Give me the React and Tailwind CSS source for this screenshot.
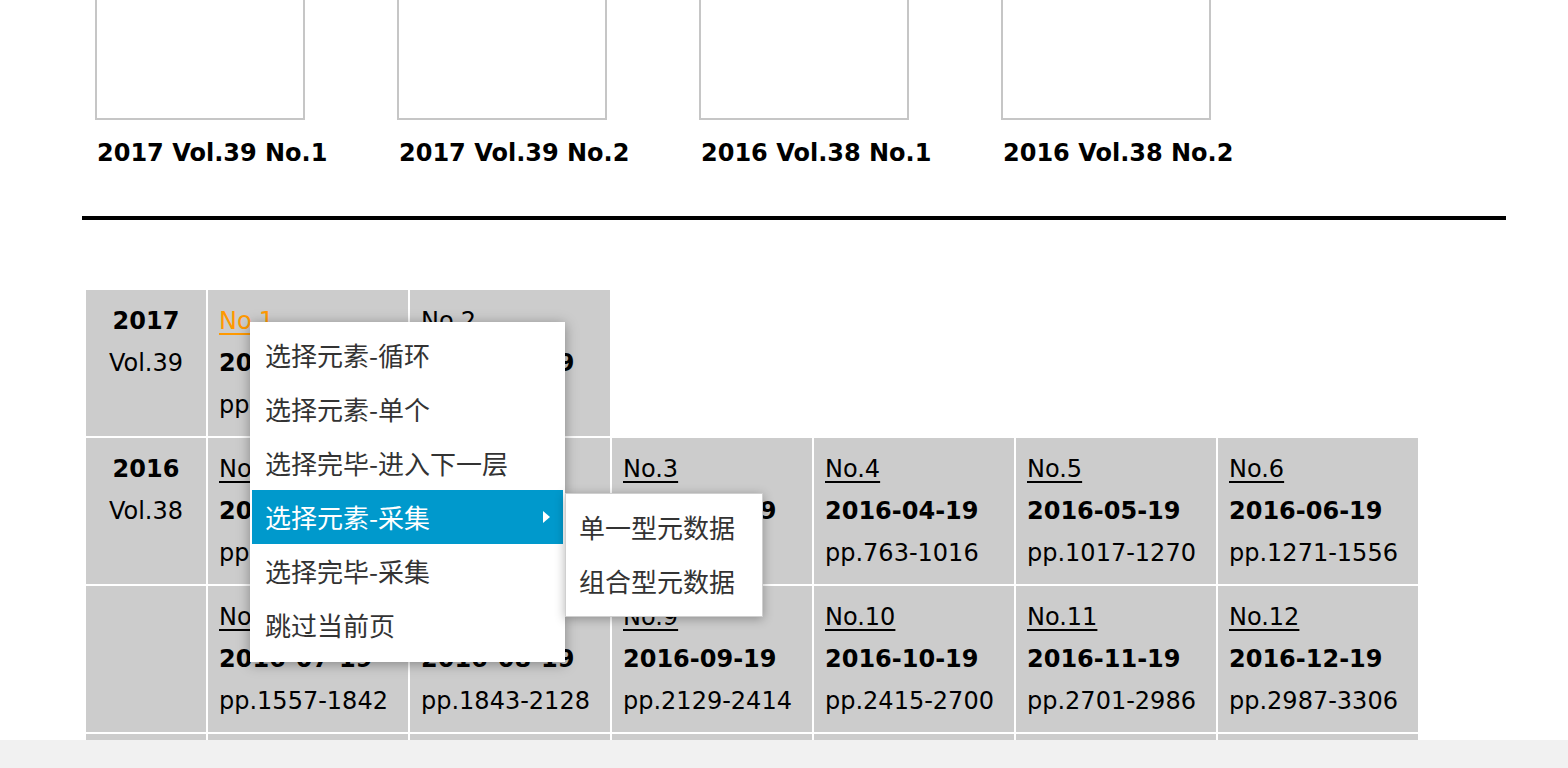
import React from 'react';

const covers = ['2017 Vol.39 No.1', '2017 Vol.39 No.2', '2016 Vol.38 No.1', '2016 Vol.38 No.2'];

const rows = [
  {
    year: '2017',
    vol: 'Vol.39',
    issues: [
      { no: 'No.1', date: '2017-01-19', pp: 'pp.1-298', active: true },
      { no: 'No.2', date: '2017-02-19', pp: 'pp.299-566' },
    ],
  },
  {
    year: '2016',
    vol: 'Vol.38',
    issues: [
      { no: 'No.1', date: '2016-01-19', pp: 'pp.1-254' },
      { no: 'No.2', date: '2016-02-19', pp: 'pp.255-508' },
      { no: 'No.3', date: '2016-03-19', pp: 'pp.509-762' },
      { no: 'No.4', date: '2016-04-19', pp: 'pp.763-1016' },
      { no: 'No.5', date: '2016-05-19', pp: 'pp.1017-1270' },
      { no: 'No.6', date: '2016-06-19', pp: 'pp.1271-1556' },
    ],
  },
  {
    year: '',
    vol: '',
    issues: [
      { no: 'No.7', date: '2016-07-19', pp: 'pp.1557-1842' },
      { no: 'No.8', date: '2016-08-19', pp: 'pp.1843-2128' },
      { no: 'No.9', date: '2016-09-19', pp: 'pp.2129-2414' },
      { no: 'No.10', date: '2016-10-19', pp: 'pp.2415-2700' },
      { no: 'No.11', date: '2016-11-19', pp: 'pp.2701-2986' },
      { no: 'No.12', date: '2016-12-19', pp: 'pp.2987-3306' },
    ],
  },
  {
    year: '2015',
    vol: 'Vol.37',
    issues: [
      { no: 'No.1', date: '2015-01-19', pp: 'pp.1-262' },
      { no: 'No.2', date: '2015-02-19', pp: 'pp.263-520' },
      { no: 'No.3', date: '2015-03-19', pp: 'pp.521-786' },
      { no: 'No.4', date: '2015-04-19', pp: 'pp.787-1040' },
      { no: 'No.5', date: '2015-05-19', pp: 'pp.1041-1300' },
      { no: 'No.6', date: '2015-06-19', pp: 'pp.1301-1572' },
    ],
  },
];

const menuItems = ['选择元素-循环', '选择元素-单个', '选择完毕-进入下一层', '选择元素-采集', '选择完毕-采集', '跳过当前页'];

const App = () => {
  return (
    <div
      className="relative flex flex-col h-[768px] w-full overflow-hidden bg-white text-black"
      style={{ fontFamily: '"DejaVu Sans", Verdana, sans-serif' }}
    >
      {/* Page content */}
      <div className="flex-1 overflow-hidden">
        {/* Covers */}
        <div className="flex pl-[95px] -mt-[30px]">
          {covers.map((c) => (
            <div key={c} className="w-[302px] shrink-0">
              <div className="w-[210px] h-[150px] border-2 border-[#c6c6c6] bg-white" />
              <div className="mt-[18px] pl-[2px] text-[24px] leading-[30px] font-bold whitespace-nowrap">{c}</div>
            </div>
          ))}
        </div>

        {/* Divider */}
        <div className="ml-[82px] w-[1424px] h-[4px] bg-black mt-[48px]" />

        {/* Issues table */}
        <div className="ml-[86px] mt-[70px] flex flex-col gap-[2px]">
          {rows.map((r, i) => (
            <div key={i} className="flex gap-[2px]">
              <div className="w-[120px] h-[146px] shrink-0 bg-[#cccccc] pt-[10px] text-center text-[24px] leading-[42px]">
                <div className="font-bold">{r.year}</div>
                <div>{r.vol}</div>
              </div>
              {r.issues.map((it) => (
                <div key={it.no} className="w-[200px] h-[146px] shrink-0 bg-[#cccccc] pt-[10px] pl-[11px] text-[24px] leading-[42px] whitespace-nowrap">
                  <div className={`underline underline-offset-[4px] ${it.active ? 'text-[#ff9900]' : 'text-black'}`}>{it.no}</div>
                  <div className="font-bold">{it.date}</div>
                  <div>{it.pp}</div>
                </div>
              ))}
            </div>
          ))}
        </div>
      </div>

      {/* Horizontal scrollbar track */}
      <div className="h-[28px] shrink-0 bg-[#f1f1f1]" />

      {/* Context menu */}
      <div
        className="absolute left-[250px] top-[322px] w-[315px] h-[340px] bg-white pt-[6px] px-[2px] shadow-[0_2px_12px_rgba(0,0,0,0.35)]"
        style={{ fontFamily: '"Noto Sans CJK SC", "Noto Sans", sans-serif' }}
      >
        {menuItems.map((m, i) => (
          <div
            key={m}
            className={`relative h-[54px] leading-[54px] pl-[13px] text-[26px] ${i === 3 ? 'bg-[#0099cc] text-white' : 'text-[#333333]'}`}
          >
            {m}
            {i === 3 && (
              <span className="absolute right-[13px] top-[21px] w-0 h-0 border-y-[6px] border-y-transparent border-l-[7px] border-l-white" />
            )}
          </div>
        ))}
      </div>

      {/* Submenu */}
      <div
        className="absolute left-[565px] top-[493px] w-[198px] h-[124px] bg-white border border-[#cfcfcf] pt-[6px] shadow-[0_2px_10px_rgba(0,0,0,0.3)]"
        style={{ fontFamily: '"Noto Sans CJK SC", "Noto Sans", sans-serif' }}
      >
        {['单一型元数据', '组合型元数据'].map((s) => (
          <div key={s} className="h-[54px] leading-[54px] pl-[13px] text-[26px] text-[#333333]">
            {s}
          </div>
        ))}
      </div>
    </div>
  );
};

export default App;
